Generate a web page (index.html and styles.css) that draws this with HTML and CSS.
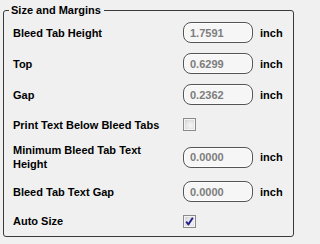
FILE: index.html
```html
<!DOCTYPE html>
<html>
<head>
<meta charset="utf-8">
<link rel="stylesheet" href="styles.css">
</head>
<body>
<fieldset class="group">
  <legend class="group-title">Size and Margins</legend>
  <div class="rows">
    <div class="row r1">
      <span class="label">Bleed Tab Height</span>
      <input class="num" type="text" value="1.7591" readonly>
      <span class="unit">inch</span>
    </div>
    <div class="row r2">
      <span class="label">Top</span>
      <input class="num" type="text" value="0.6299" readonly>
      <span class="unit">inch</span>
    </div>
    <div class="row r3">
      <span class="label">Gap</span>
      <input class="num" type="text" value="0.2362" readonly>
      <span class="unit">inch</span>
    </div>
    <div class="row r4">
      <span class="label">Print Text Below Bleed Tabs</span>
      <span class="check"><span class="check-inner"></span></span>
    </div>
    <div class="row r5">
      <span class="label">Minimum Bleed Tab Text Height</span>
      <input class="num" type="text" value="0.0000" readonly>
      <span class="unit">inch</span>
    </div>
    <div class="row r6">
      <span class="label">Bleed Tab Text Gap</span>
      <input class="num" type="text" value="0.0000" readonly>
      <span class="unit">inch</span>
    </div>
    <div class="row r7">
      <span class="label">Auto Size</span>
      <span class="check"><span class="check-inner">
        <svg class="tick" width="9" height="9" viewBox="0 0 9 9"><path d="M1.2 4.6 L3.4 7.4 L7.8 0.8" fill="none" stroke="#1f1f8f" stroke-width="1.9" stroke-linejoin="round"/></svg>
      </span></span>
    </div>
  </div>
</fieldset>
</body>
</html>
```
FILE: styles.css
```css
html, body {
  margin: 0;
  padding: 0;
  background: #f0f0f0;
}
body {
  font-family: "Liberation Sans", Arial, sans-serif;
  font-size: 11px;
  font-weight: bold;
  color: #000;
  width: 299px;
  height: 244px;
  overflow: hidden;
}
.group {
  box-sizing: border-box;
  margin: 4px 0 0 3px;
  width: 291px;
  height: 233px;
  border: 1px solid #3a3a3a;
  border-radius: 3px;
  padding: 0;
  min-width: 0;
}
.group-title {
  margin-left: 5px;
  padding: 0 3px 0 2px;
  line-height: 13px;
  font-weight: bold;
}
.rows {
  padding-left: 9px;
}
.row {
  display: flex;
  align-items: center;
}
.r1, .r2, .r3 { height: 31px; }
.r4 { height: 29px; }
.r5 { height: 36px; }
.r6 { height: 33px; }
.r7 { height: 26px; }
.label {
  width: 170px;
  flex: none;
  line-height: 14px;
}
.r5 .label {
  width: 130px;
  margin-right: 40px;
}
.num {
  box-sizing: border-box;
  width: 70px;
  height: 21px;
  margin: 0;
  border: 1px solid #555;
  border-radius: 8px;
  background: #f6f6f6;
  box-shadow: inset 0 0 0 1px #fdfdfd;
  padding: 0 0 0 6px;
  font-family: "Liberation Sans", Arial, sans-serif;
  font-size: 11px;
  font-weight: bold;
  color: #7d7d7d;
  outline: none;
  flex: none;
}
.unit {
  margin-left: 7px;
}
.check {
  box-sizing: border-box;
  width: 13px;
  height: 13px;
  border: 1px solid #8a8a8a;
  background: #f4f4f4;
  padding: 1px;
  display: flex;
  flex: none;
}
.check-inner {
  flex: 1;
  background: radial-gradient(circle at 60% 60%, #f6f6f6 0%, #e4e4e4 55%, #cfcfcf 100%);
  display: flex;
  align-items: center;
  justify-content: center;
}
.tick {
  display: block;
}
```
